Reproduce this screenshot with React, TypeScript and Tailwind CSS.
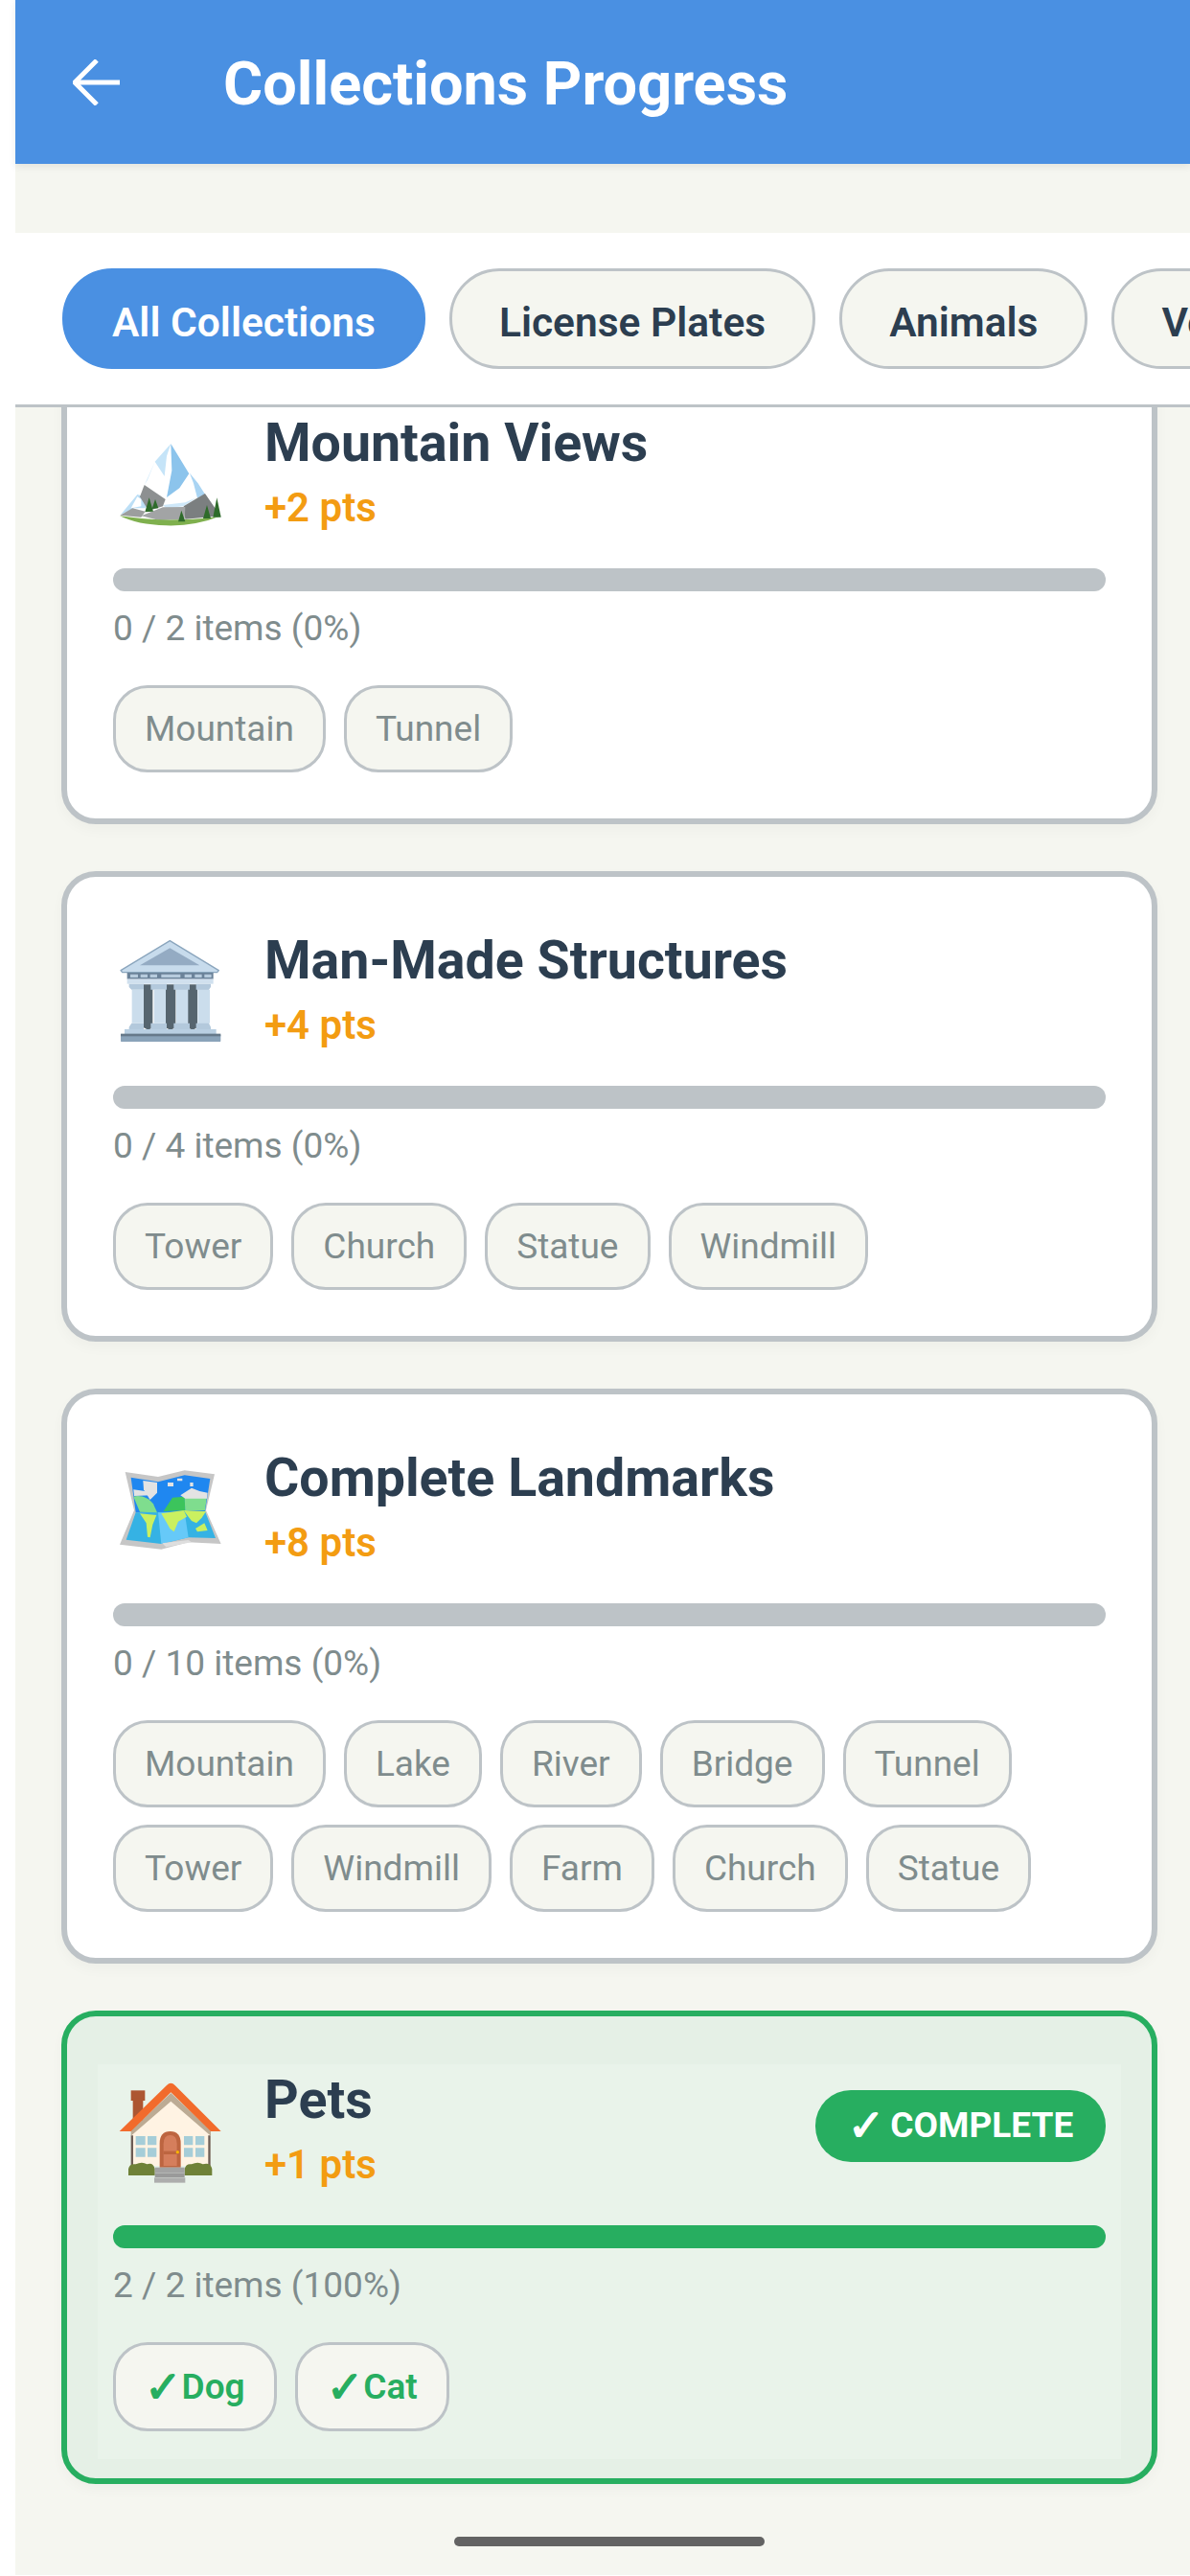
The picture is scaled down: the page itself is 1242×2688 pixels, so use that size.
const MountainIcon = () => (
  <svg width="130" height="120" viewBox="0 0 130 120" className="shrink-0 -ml-[8px]">
    <g transform="translate(0 7) scale(.3333)">
      <path d="M205 66 L155 122 L122 195 L190 245 L300 232 L262 160 Z" fill="#ffffff" />
      <path d="M205 66 L262 160 L232 205 L192 234 L208 150 Z" fill="#8cc4ec" />
      <path d="M205 66 L155 122 L185 168 L192 105 Z" fill="#c5e4f8" />
      <path d="M155 122 L122 195 L132 180 L155 122 Z" fill="#d8edfb" />
      <path d="M262 160 L245 212 L180 258 L250 250 L312 222 Z" fill="#ffffff" />
      <path d="M264 158 L290 190 L312 224 L288 236 L276 190 Z" fill="#a9d4f3" />
      <path d="M180 258 L250 250 L285 235 L245 262 L190 268 Z" fill="#cfe8f9" />
      <path d="M100 225 L48 288 L90 268 L125 268 L135 235 Z" fill="#bcdff6" />
      <path d="M100 232 L80 268 L112 262 L112 240 Z" fill="#ffffff" />
      <path d="M122 195 L188 240 L180 262 L135 276 L108 232 Z" fill="#8d9091" />
      <path d="M312 222 L345 270 L362 292 L250 302 L245 262 L285 238 Z" fill="#7b7f80" />
      <path d="M112 292 L180 265 L250 264 L248 302 L170 306 Z" fill="#a2a4a5" />
      <path d="M46 290 L85 268 L125 278 L112 296 Z" fill="#9c9e9e" />
      <path d="M45 292 Q120 302 170 304 Q300 306 362 292 Q280 325 190 322 Q100 320 45 292 Z" fill="#7fb04e" />
      <path d="M137 235 L150 278 L124 280 Z" fill="#2e6b2a" />
      <path d="M156 240 L166 268 L146 270 Z" fill="#2e6b2a" />
      <path d="M238 275 L250 310 L228 310 Z" fill="#2e6b2a" />
      <path d="M318 258 L330 300 L306 300 Z" fill="#2e6b2a" />
      <path d="M349 235 L362 296 L337 296 Z" fill="#2e6b2a" />
    </g>
  </svg>
);

const BuildingIcon = () => (
  <svg width="130" height="120" viewBox="0 0 130 120" className="shrink-0 -ml-[8px]">
    <g transform="translate(-70 -74) scale(.3333)">
      <path d="M258 338 L412 245 L565 338 L560 344 L263 344 Z" fill="#c7dbec" stroke="#8aa5bd" strokeWidth="4" strokeLinejoin="round" />
      <path d="M318 322 L412 268 L505 322 Z" fill="#94abc3" />
      <rect x="278" y="345" width="270" height="20" fill="#6b8299" />
      <path d="M288 350h24v10h-24zM320 350h22v10h-22zM350 350h22v10h-22zM385 350h60v10h-60zM458 350h22v10h-22zM490 350h22v10h-22zM520 350h22v10h-22z" fill="#b7cbdd" />
      <rect x="278" y="365" width="270" height="15" fill="#d0e0ee" />
      <path d="M330 382h28v135l-14 7l-14-7zM398 382h32v135l-16 7l-16-7zM468 382h30v135l-15 7l-15-7z" fill="#56656f" />
      <path d="M284 380h46v18h-38v105h38v20h-46v-8l8-12v-105l-8-8zM352 380h50v18h-40v105h40v20h-50v-20l10 0v-105l-10 0zM424 380h50v18h-8v105h8v20h-50v-20h8v-105h-8zM494 380h46v10l-6 8v105l6 12v8h-46v-20h6v-105h-6z" fill="#b3c9dc" />
      <path d="M293 398h37v105h-37zM362 398h37v105h-37zM432 398h37v105h-37zM500 398h37v105h-37z" fill="#cbddec" />
      <rect x="270" y="522" width="287" height="16" fill="#b9cfe2" />
      <rect x="258" y="538" width="313" height="23" rx="2" fill="#8aa3b9" />
      <rect x="258" y="536" width="313" height="8" fill="#66798a" />
    </g>
  </svg>
);

const MapIcon = () => (
  <svg width="130" height="120" viewBox="0 0 130 120" className="shrink-0 -ml-[8px]">
    <g transform="translate(-70 -73) scale(.3333)">
      <path d="M272 285 L375 300 L458 280 L552 292 L525 405 L572 510 L470 505 L385 527 L255 512 L300 405 Z" fill="#c6c6c6" />
      <path d="M290 302 L375 316 L458 295 L538 306 L522 410 L305 412 Z" fill="#1f87f0" />
      <path d="M305 412 L522 408 L555 492 L470 490 L385 510 L275 497 Z" fill="#35b2e4" />
      <path d="M375 412 L458 410 L470 490 L385 510 Z" fill="#66c9f8" />
      <path d="M298 362 C320 356 345 365 360 385 L372 412 L318 410 Z" fill="#7fdd8e" />
      <path d="M328 312 L372 318 L372 350 L350 372 L330 340 Z" fill="#e3e3e3" />
      <path d="M298 340 L335 345 L352 358 L300 360 Z" fill="#e3e3e3" />
      <path d="M392 408 L420 365 L458 362 L460 405 Z" fill="#3cc45c" />
      <path d="M458 362 L528 360 L522 405 L460 405 Z" fill="#7fdd8e" />
      <path d="M445 358 L480 335 L505 345 L530 350 L528 368 L460 368 Z" fill="#e3e3e3" />
      <path d="M405 318h18v12h-18zM435 305h16v8h-16zM475 318h10v12h-10z" fill="#e3e3e3" />
      <path d="M318 415 L370 420 L358 450 L350 490 L342 488 L338 445 Z" fill="#caf060" />
      <path d="M385 415 L455 405 L465 425 L438 440 L425 472 L412 462 L400 440 Z" fill="#caf060" />
      <path d="M455 405 L525 408 L512 428 L495 445 L480 438 L470 425 Z" fill="#caf060" />
      <path d="M492 462 L520 445 L530 468 L498 472 Z" fill="#caf060" />
      <path d="M388 508 L470 498 L480 505 L400 520 Z" fill="#dedede" />
    </g>
  </svg>
);

const HouseIcon = () => (
  <svg width="130" height="120" viewBox="0 0 130 120" className="shrink-0 -ml-[8px]">
    <g transform="translate(0 -3) scale(.3333)">
      <rect x="80" y="64" width="44" height="32" fill="#ad5632" />
      <rect x="86" y="90" width="32" height="70" fill="#ad5632" />
      <path d="M82 195 L205 85 L328 195 V300 H82 Z" fill="#fff3e3" />
      <path d="M80 205h7v95h-7zM322 205h7v95h-7z" fill="#6d5d55" />
      <path d="M80 190 L205 72 L330 190 L330 206 L205 98 L80 206 Z" fill="#bcab94" />
      <path d="M44 192 L192 48 Q205 34 218 48 L362 192 L330 192 L205 70 L80 192 Z" fill="#f26b2c" />
      <path d="M95 207h30v28h-30zM132 207h28v28h-28zM95 244h30v28h-30zM132 244h28v28h-28zM246 207h28v28h-28zM282 207h28v28h-28zM246 244h28v28h-28zM282 244h28v28h-28z" fill="#a5cdd8" />
      <path d="M170 305 V230 Q170 192 203 192 Q236 192 236 230 V305 Z" fill="#bd6540" />
      <path d="M182 300 V232 Q182 204 203 204 Q224 204 224 232 V300 Z" fill="#d57e5c" />
      <rect x="182" y="254" width="42" height="10" fill="#bd6540" />
      <circle cx="226" cy="257" r="5" fill="#f7b500" />
      <path d="M72 330 V310 Q75 292 95 295 Q115 285 130 295 Q150 288 155 310 V330 Z" fill="#6f8138" />
      <path d="M248 330 V310 Q252 292 270 295 Q290 285 305 295 Q330 288 334 310 V330 Z" fill="#6f8138" />
      <rect x="155" y="305" width="93" height="16" fill="#a3a3a3" />
      <rect x="155" y="322" width="93" height="14" fill="#9a9a9a" />
      <rect x="153" y="337" width="97" height="16" fill="#adadad" />
    </g>
  </svg>
);

type Collection = {
  title: string;
  points: number;
  items: string[];
  icon: React.ReactNode;
  done?: boolean;
};

const collections: Collection[] = [
  { title: "Mountain Views", points: 2, items: ["Mountain", "Tunnel"], icon: <MountainIcon /> },
  { title: "Man-Made Structures", points: 4, items: ["Tower", "Church", "Statue", "Windmill"], icon: <BuildingIcon /> },
  {
    title: "Complete Landmarks",
    points: 8,
    items: ["Mountain", "Lake", "River", "Bridge", "Tunnel", "Tower", "Windmill", "Farm", "Church", "Statue"],
    icon: <MapIcon />,
  },
  { title: "Pets", points: 1, items: ["Dog", "Cat"], icon: <HouseIcon />, done: true },
];

const Check = ({ className = "" }: { className?: string }) => (
  <span className={`text-[46px] leading-none [-webkit-text-stroke:1.5px_currentColor] ${className}`}>✓</span>
);

function CollectionCard({ item }: { item: Collection }) {
  const count = item.items.length;
  return (
    <div
      className={`rounded-[36px] border-[6px] px-[32px] pt-[50px] shadow-[0_6px_14px_rgba(0,0,0,0.03)] ${
        item.done ? "mb-[51px] border-[#27ae60] bg-[#e5f0e6] pb-[20px]" : "mb-[49px] border-[#bdc3c7] bg-white pb-[19px]"
      }`}
    >
      <div className={`px-[16px] pb-[29px] ${item.done ? "bg-[#e9f3ea]" : ""}`}>
        <div className="mb-[30px] flex h-[138px] items-center">
          <div className="w-[158px] shrink-0">{item.icon}</div>
          <div className="flex-1">
            <div className="text-[55.5px] leading-[63px] font-bold text-[#2c3e50]">{item.title}</div>
            <div className="mt-[8px] text-[42px] leading-[56px] font-semibold text-[#f39c12]">+{item.points} pts</div>
          </div>
          {item.done && (
            <div className="mb-[10px] flex h-[75px] w-[303px] items-center justify-center rounded-[37px] bg-[#27ae60] text-[37px] font-bold text-white">
              <Check className="mr-[6px]" />
              COMPLETE
            </div>
          )}
        </div>
        <div className={`h-[24px] rounded-[12px] ${item.done ? "bg-[#27ae60]" : "bg-[#bdc3c7]"}`} />
        <div className="mt-[15px] mb-[35px] text-[37px] leading-[48px] text-[#7f8c8d]">
          {item.done ? `${count} / ${count}` : `0 / ${count}`} items ({item.done ? "100" : "0"}%)
        </div>
        <div className="flex flex-wrap gap-x-[19px] gap-y-[18px]">
          {item.items.map((name) => (
            <div
              key={name}
              className={`flex items-center rounded-[36px] border-[3px] border-[#bdc3c7] bg-[#f5f6f0] px-[30px] text-[37px] ${
                item.done ? "h-[93px] font-semibold text-[#27ae60]" : "h-[91px] text-[#7f8c8d]"
              }`}
            >
              {item.done && <Check />}
              {name}
            </div>
          ))}
        </div>
      </div>
    </div>
  );
}

export default function App() {
  const tabs = ["All Collections", "License Plates", "Animals", "Vehicles"];
  return (
    <div className="h-[2688px] w-[1242px] overflow-hidden bg-white pl-[16px] [font-family:Roboto,'DejaVu_Sans',sans-serif]">
      <div className="relative flex h-[2687px] flex-col bg-[#f5f6f0]">
        {/* Header */}
        <div className="z-10 flex h-[171px] shrink-0 items-center bg-[#4a90e2] pl-[60px] shadow-[0_3px_8px_rgba(0,0,0,0.08)]">
          <svg width="50" height="48" viewBox="0 0 50 48" fill="none" className="shrink-0">
            <path d="M2 24 H49 M25 1 L2 24 L25 47" stroke="white" strokeWidth="5" />
          </svg>
          <h1 className="ml-[107px] pt-[6px] text-[63px] font-bold text-white">Collections Progress</h1>
        </div>

        {/* Filter tabs */}
        <div className="mt-[72px] flex h-[182px] shrink-0 items-center gap-[25px] overflow-hidden border-b-[3px] border-[#bdc3c7] bg-white pl-[49px]">
          {tabs.map((tab, i) => (
            <div
              key={tab}
              className={`flex h-[105px] shrink-0 items-center rounded-[52px] border-[3px] px-[49px] pt-[9px] text-[42.5px] font-semibold ${
                i === 0 ? "border-[#4a90e2] bg-[#4a90e2] text-white" : "border-[#bdc3c7] bg-[#f5f6f0] text-[#2c3e50]"
              }`}
            >
              {tab}
            </div>
          ))}
        </div>

        {/* Scrolled list */}
        <div className="flex-1 overflow-hidden pr-[34px] pl-[48px]">
          <div className="-mt-[56px]">
            {collections.map((item) => (
              <CollectionCard key={item.title} item={item} />
            ))}
          </div>
        </div>

        {/* Home indicator */}
        <div className="absolute top-[2647px] left-[458px] h-[10px] w-[324px] rounded-[5px] bg-[#636363]" />
      </div>
    </div>
  );
}
